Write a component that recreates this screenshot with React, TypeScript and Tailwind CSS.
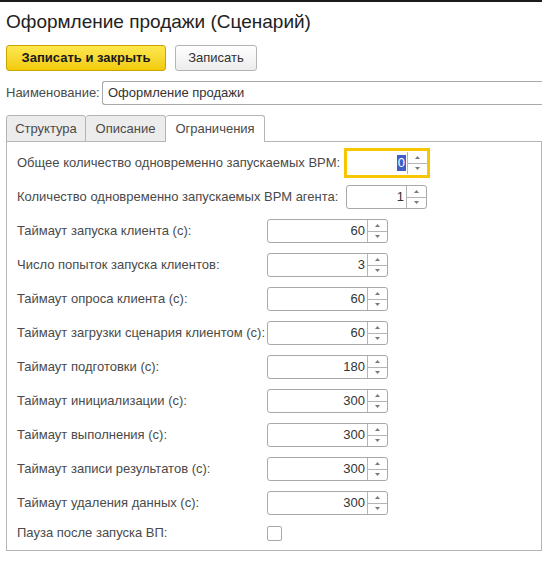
import React from "react";

// Ограничения сценария — строки формы
const rows = [
  { label: "Таймаут запуска клиента (с):", value: "60" },
  { label: "Число попыток запуска клиентов:", value: "3" },
  { label: "Таймаут опроса клиента (с):", value: "60" },
  { label: "Таймаут загрузки сценария клиентом (с):", value: "60" },
  { label: "Таймаут подготовки (с):", value: "180" },
  { label: "Таймаут инициализации (с):", value: "300" },
  { label: "Таймаут выполнения (с):", value: "300" },
  { label: "Таймаут записи результатов (с):", value: "300" },
  { label: "Таймаут удаления данных (с):", value: "300" },
];

const Arrow = ({ up }: { up?: boolean }) => (
  <svg width="5" height="3" viewBox="0 0 5 3" className="block">
    <path d={up ? "M2.5 0L5 3H0Z" : "M0 0H5L2.5 3Z"} fill="#7a7a7a" />
  </svg>
);

const Spinner = () => (
  <div className="flex flex-col w-[20px] h-full border-l border-[#b5b5b5]">
    <div className="flex-1 flex items-center justify-center border-b border-[#b5b5b5]">
      <Arrow up />
    </div>
    <div className="flex-1 flex items-center justify-center">
      <Arrow />
    </div>
  </div>
);

const NumberField = ({
  value,
  width,
  focused,
}: {
  value: string;
  width: string;
  focused?: boolean;
}) =>
  focused ? (
    <div className={`${width} h-[30px] border-[3px] border-[#f7c600] flex bg-white`}>
      <div className="flex-1 flex items-center justify-end pr-[1px] text-[#333]">
        <span className="bg-[#3e5fc9] text-white leading-[16px] px-[1px]">{value}</span>
      </div>
      <div className="py-[1px] h-full">
        <Spinner />
      </div>
    </div>
  ) : (
    <div className={`${width} h-[24px] border border-[#a9a9a9] rounded-[3px] flex bg-white`}>
      <div className="flex-1 flex items-center justify-end pr-[2px] text-[#333]">{value}</div>
      <Spinner />
    </div>
  );

export default function App() {
  return (
    <div className="w-[545px] h-[561px] bg-white font-['Liberation_Sans',Arial,sans-serif] text-[13px] text-[#4a4a4a] overflow-hidden">
      <div className="w-[542px] h-[2px] bg-[#1a1a1a]" />

      <div className="pl-[6px] w-[542px]">
        <h1 className="text-[19px] leading-[22px] text-[#222] mt-[9px]">
          Оформление продажи (Сценарий)
        </h1>

        <div className="flex gap-[9px] mt-[12px]">
          <button className="w-[160px] h-[26px] rounded-[3px] border border-[#c9a400] bg-gradient-to-b from-[#fde84c] to-[#f2cb00] font-bold text-[#1a1a1a] text-[13px]">
            Записать и закрыть
          </button>
          <button className="w-[82px] h-[26px] rounded-[3px] border border-[#b3b3b3] bg-gradient-to-b from-white to-[#ececec] text-[#333] text-[13px]">
            Записать
          </button>
        </div>

        <div className="flex items-center mt-[10px] h-[24px]">
          <span className="w-[96px]">Наименование:</span>
          <div className="flex-1 h-[24px] border border-[#a9a9a9] rounded-l-[3px] border-r-0 flex items-center pl-[5px] text-[#333]">
            Оформление продажи
          </div>
        </div>

        <div className="flex mt-[10px] h-[27px] relative z-10">
          <div className="w-[80px] border border-[#b5b5b5] rounded-t-[3px] bg-[#ececec] flex items-center justify-center">
            Структура
          </div>
          <div className="w-[80px] border border-l-0 border-[#b5b5b5] rounded-t-[3px] bg-[#ececec] flex items-center justify-center">
            Описание
          </div>
          <div className="w-[99px] border border-l-0 border-b-0 border-[#b5b5b5] rounded-t-[3px] bg-white flex items-center justify-center">
            Ограничения
          </div>
        </div>

        <div className="w-[536px] h-[410px] -mt-[1px] border border-[#b5b5b5] pl-[10px] pt-[4px]">
          <div className="flex items-center h-[34px]">
            <span className="w-[327px]">Общее количество одновременно запускаемых ВРМ:</span>
            <NumberField value="0" width="w-[86px]" focused />
          </div>
          <div className="flex items-center h-[34px]">
            <span className="w-[329px]">Количество одновременно запускаемых ВРМ агента:</span>
            <NumberField value="1" width="w-[81px]" />
          </div>
          {rows.map((r) => (
            <div key={r.label} className="flex items-center h-[34px]">
              <span className="w-[250px]">{r.label}</span>
              <NumberField value={r.value} width="w-[121px]" />
            </div>
          ))}
          <div className="flex items-center h-[26px]">
            <span className="w-[250px]">Пауза после запуска ВП:</span>
            <div className="w-[15px] h-[15px] border border-[#a9a9a9] rounded-[2px] bg-white" />
          </div>
        </div>
      </div>
    </div>
  );
}
